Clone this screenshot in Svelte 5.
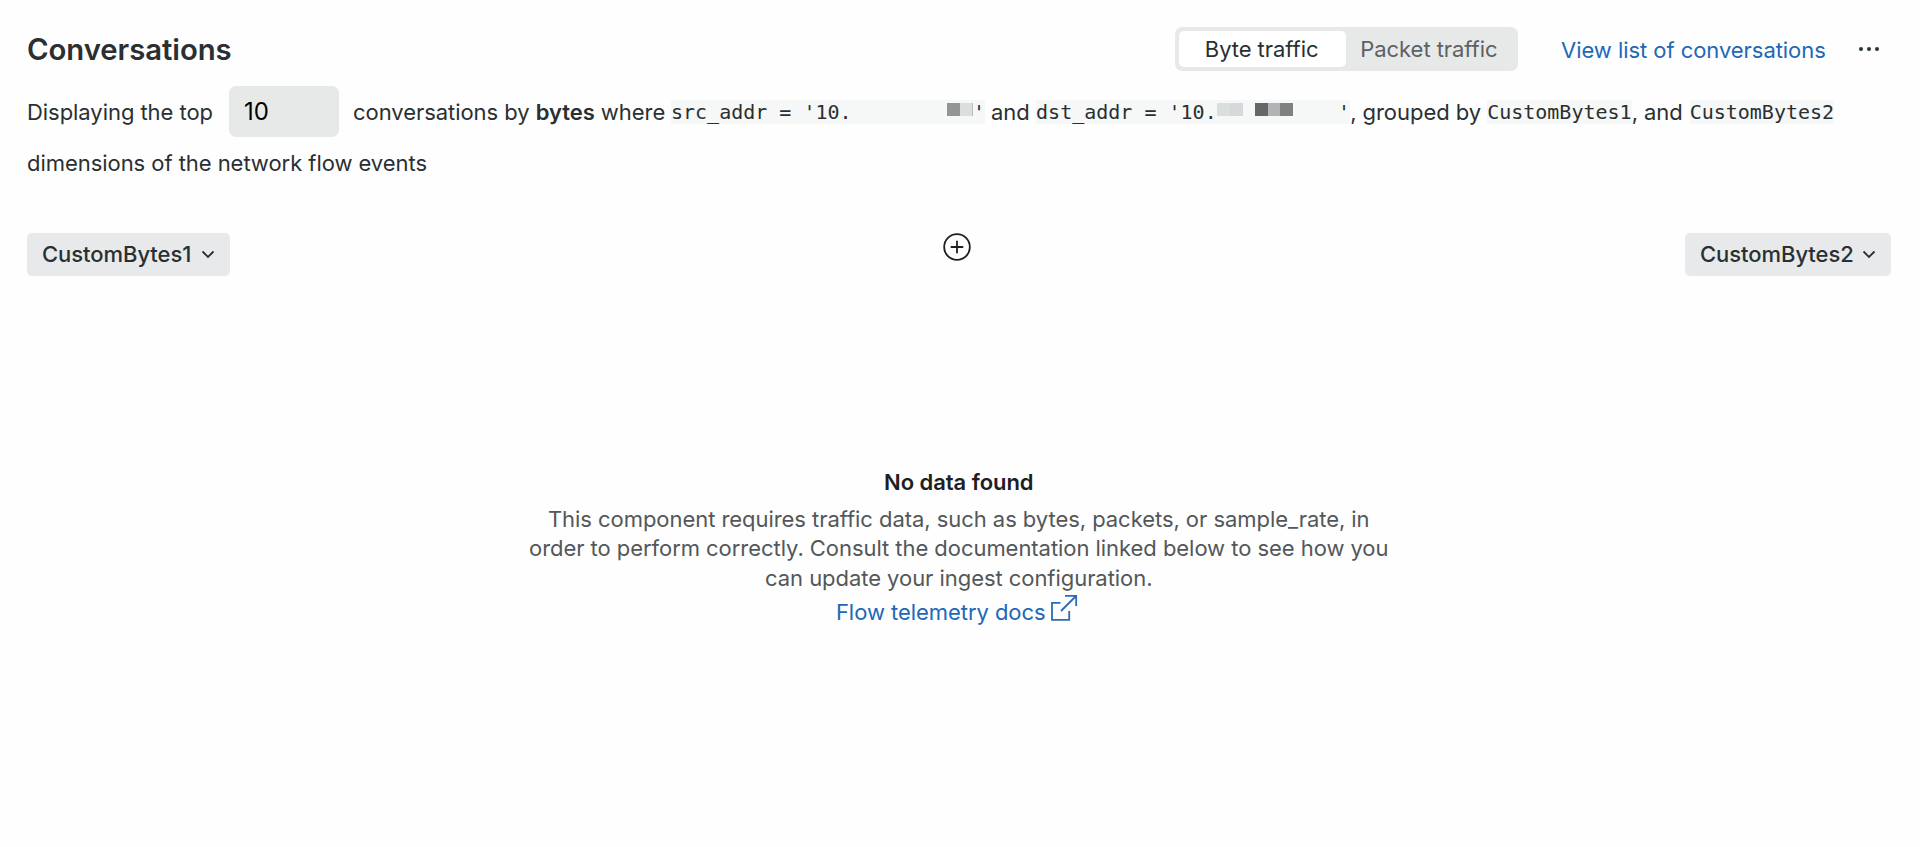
<script>
  let mode = $state('bytes');
  let limit = $state('10');
</script>

<main>
  <header>
    <h2>Conversations</h2>
    <div class="tools">
      <div class="toggle">
        <button class:active={mode === 'bytes'} onclick={() => (mode = 'bytes')}>Byte traffic</button>
        <button class:active={mode === 'packets'} onclick={() => (mode = 'packets')}>Packet traffic</button>
      </div>
      <a class="list" href="#list">View list of conversations</a>
      <svg class="dots" width="20" height="6" viewBox="0 0 20 6" fill="#293338">
        <circle cx="2" cy="3" r="2" /><circle cx="10" cy="3" r="2" /><circle cx="18" cy="3" r="2" />
      </svg>
    </div>
  </header>

  <div class="sentence">
    <div class="line">
      <span class="s1">Displaying the top</span>
      <input bind:value={limit} aria-label="Limit" />
      <span class="s2">conversations by <b>bytes</b> where</span>
      <code>src_addr = '10.<span class="mask src"><i></i><i></i><i></i></span>'</code>
      <span class="s3">and</span>
      <code>dst_addr = '10.<span class="mask dst"><i></i><i></i><i></i><i></i><i></i></span>'</code>
      <span class="s4">, grouped by</span>
      <code>CustomBytes1</code>
      <span class="s5">, and</span>
      <code>CustomBytes2</code>
    </div>
    <div class="line"><span class="s6">dimensions of the network flow events</span></div>
  </div>

  <div class="dims">
    <button class="dim first">
      <span>CustomBytes1</span>
      <svg width="14" height="9" viewBox="0 0 14 9"><path d="M1.5 1.5 7 7l5.5-5.5" /></svg>
    </button>
    <svg class="plus" width="28" height="28" viewBox="0 0 28 28">
      <circle cx="14" cy="14" r="12.8" /><path d="M14 7.7v12.6M7.7 14h12.6" />
    </svg>
    <button class="dim second">
      <span>CustomBytes2</span>
      <svg width="14" height="9" viewBox="0 0 14 9"><path d="M1.5 1.5 7 7l5.5-5.5" /></svg>
    </button>
  </div>

  <section class="empty">
    <h3>No data found</h3>
    <p>
      <span class="d1">This component requires traffic data, such as bytes, packets, or sample_rate, in</span><br />
      <span class="d2">order to perform correctly. Consult the documentation linked below to see how you</span><br />
      <span class="d3">can update your ingest configuration.</span>
    </p>
    <a href="#docs">
      <span>Flow telemetry docs</span>
      <svg width="28" height="28" viewBox="0 0 28 28">
        <path d="M10.5 8.8H2v17h17.2V17M11 17 26 2M15 1.8h11.2V12" />
      </svg>
    </a>
  </section>
</main>

<style>
  :global(body) { background: #fefefe; }
  main {
    box-sizing: border-box;
    height: 847px;
    padding: 27px 29.5px 0 27px;
    font: 22px/29.3px Inter, sans-serif;
    letter-spacing: -0.05px;
    color: #2a2f31;
    white-space: nowrap;
    overflow: hidden;
  }
  button, input { border: 0; font: inherit; letter-spacing: inherit; color: inherit; padding: 0; margin: 0; }
  a { color: #2167b8; text-decoration: none; }
  header { display: flex; justify-content: space-between; align-items: center; height: 44px; }
  h2 { margin: 1px 0 0; font-size: 29.3px; font-weight: 600; line-height: 44px; }
  .tools { display: flex; align-items: center; padding-right: 11.5px; }
  .toggle {
    box-sizing: border-box; width: 342.5px; height: 44px; padding: 4px;
    display: flex; background: #e7e9e9; border-radius: 7px;
  }
  .toggle button { flex: 1; background: none; color: #5b6164; border-radius: 5px; padding: 1px 2px 0 0; }
  .toggle .active { background: #fff; color: #2a2f31; }
  .list { margin: 3px 0 0 43.5px; width: 264px; }
  .dots { margin-left: 34px; }
  .sentence { margin: 15px 0 0; }
  .line { display: flex; align-items: center; height: 51px; }
  .line > span { padding-top: 2px; }
  b { font-weight: 600; }
  input {
    box-sizing: border-box; width: 110px; height: 51px; margin: 0 14px 0 15px;
    padding: 0 14px 0 15px; border-radius: 7px; background: #e7e9e9;
    color: #000; font-size: 24px; outline: none;
  }
  .s1 { width: 187px; }
  .s2 { width: 318px; }
  .s3 { width: 39px; margin: 0 6px; }
  .s4 { width: 137px; }
  .s5 { width: 58px; }
  code {
    display: flex; align-items: center; height: 23px; background: #f6f7f7; padding-top: 1px;
    font: 20px/23px "DejaVu Sans Mono", monospace; letter-spacing: 0; white-space: pre;
  }
  .mask { display: flex; width: 121.4px; height: 13px; margin-top: -6px; }
  .mask i { height: 13px; }
  .src i:nth-child(1) { width: 13px; margin-left: 95px; background: #939494; }
  .src i:nth-child(2) { width: 12.4px; background: #dcdddd; }
  .src i:nth-child(3) { width: 1px; background: #bbb; }
  .dst i:nth-child(1) { width: 13px; background: #dadedf; }
  .dst i:nth-child(2) { width: 13px; background: #d5d9db; }
  .dst i:nth-child(3) { width: 13px; margin-left: 12px; background: #656666; }
  .dst i:nth-child(4) { width: 12px; background: #b1b4b6; }
  .dst i:nth-child(5) { width: 13px; background: #7e8081; }
  .dims { display: flex; justify-content: space-between; margin-top: 44.5px; height: 43px; }
  .dim {
    display: flex; align-items: center; height: 43.5px; padding: 0 15px;
    border-radius: 5px; background: #e7e9ea; font-weight: 500;
  }
  .dim span { flex: 1; text-align: left; }
  .dim path { fill: none; stroke: #2a2f31; stroke-width: 1.8; }
  .first { width: 203px; }
  .second { width: 205.5px; }
  .plus { flex: none; margin-right: 2px; fill: none; stroke: #1d1f20; stroke-width: 1.8; }
  .empty { margin-top: 192.5px; text-align: center; }
  h3 { margin: 0; font-size: 22px; line-height: 29px; font-weight: 600; color: #1d2022; }
  p { margin: 8px 0 0; color: #535759; }
  .empty a { display: flex; justify-content: center; align-items: center; height: 40px; padding-right: 4px; }
  .empty a svg { margin: -10px 0 0 4px; fill: none; stroke: #2b6cb5; stroke-width: 1.8; }
</style>
